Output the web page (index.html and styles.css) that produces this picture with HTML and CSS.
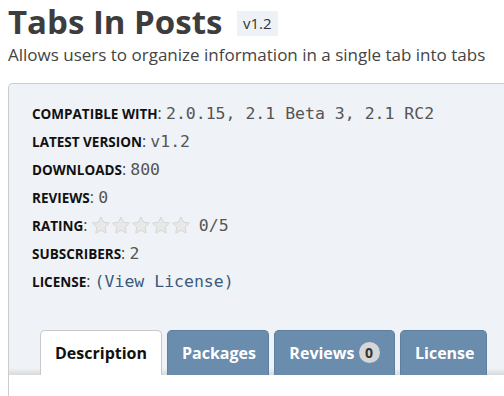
FILE: index.html
```html
<!DOCTYPE html>
<html lang="en">
<head>
  <meta charset="UTF-8" />
  <title>Tabs In Posts</title>
  <link rel="stylesheet" href="styles.css">
</head>
<body>

  <h1 class="title">Tabs In Posts <span class="ver">v1.2</span></h1>
  <p class="summary">Allows users to organize information in a single tab into tabs</p>

  <div class="info">
    <ul class="facts">
      <li><b>COMPATIBLE WITH</b>: <code>2.0.15, 2.1 Beta 3, 2.1 RC2</code></li>
      <li><b>LATEST VERSION</b>: <code>v1.2</code></li>
      <li><b>DOWNLOADS</b>: <code>800</code></li>
      <li><b>REVIEWS</b>: <code>0</code></li>
      <li><b>RATING</b>:
        <span class="stars">
          <svg width="20" height="18" viewBox="0 0 20 18"><path d="M10 1l2.6 5.3 5.8.8-4.2 4.1 1 5.8L10 14.3 4.8 17l1-5.8L1.6 7.1l5.8-.8z"/></svg>
          <svg width="20" height="18" viewBox="0 0 20 18"><path d="M10 1l2.6 5.3 5.8.8-4.2 4.1 1 5.8L10 14.3 4.8 17l1-5.8L1.6 7.1l5.8-.8z"/></svg>
          <svg width="20" height="18" viewBox="0 0 20 18"><path d="M10 1l2.6 5.3 5.8.8-4.2 4.1 1 5.8L10 14.3 4.8 17l1-5.8L1.6 7.1l5.8-.8z"/></svg>
          <svg width="20" height="18" viewBox="0 0 20 18"><path d="M10 1l2.6 5.3 5.8.8-4.2 4.1 1 5.8L10 14.3 4.8 17l1-5.8L1.6 7.1l5.8-.8z"/></svg>
          <svg width="20" height="18" viewBox="0 0 20 18"><path d="M10 1l2.6 5.3 5.8.8-4.2 4.1 1 5.8L10 14.3 4.8 17l1-5.8L1.6 7.1l5.8-.8z"/></svg>
        </span>
        <code>0/5</code></li>
      <li><b>SUBSCRIBERS</b>: <code>2</code></li>
      <li><b>LICENSE</b>: <code class="link">(View License)</code></li>
    </ul>

    <div class="tabs">
      <a class="tab active" href="#description">Description</a>
      <a class="tab" href="#packages">Packages</a>
      <a class="tab" href="#reviews">Reviews <span class="count">0</span></a>
      <a class="tab" href="#license">License</a>
    </div>
    <div class="panel"></div>
  </div>

</body>
</html>
```

FILE: styles.css
```css
body {
  margin: 0;
  padding: 0 0 0 8px;
  font-family: "Open Sans", "Noto Sans", sans-serif;
  color: #444;
  background: #fff;
  overflow: hidden;
}
.title {
  margin: 2px 0 0;
  font-size: 33px;
  line-height: 40px;
  font-weight: 700;
  color: #3d3d3d;
}
.ver {
  display: inline-block;
  vertical-align: 5px;
  margin-left: 6px;
  padding: 0 6px;
  background: #eef2f6;
  font-size: 15px;
  font-weight: 400;
  line-height: 25px;
  color: #333;
}
.summary {
  margin: 2px 0 0;
  font-size: 17px;
  line-height: 22px;
  color: #444;
}
.info {
  margin-top: 17px;
  margin-right: -20px;
  background: #eff3f7;
  border: 1px solid #ccc;
  border-right: none;
  border-bottom: none;
  border-radius: 5px 0 0 0;
}
.facts {
  list-style: none;
  margin: 0;
  padding: 15px 0 0 23px;
}
.facts li {
  height: 28px;
  line-height: 28px;
  font-size: 16px;
  white-space: nowrap;
}
.facts b {
  font-size: 13.5px;
  font-weight: 700;
  color: #111;
}
.facts code {
  font-family: "DejaVu Sans Mono", "Liberation Mono", monospace;
  font-size: 16.5px;
  color: #555;
}
.facts .link {
  color: #3b5a7a;
}
.stars {
  display: inline-flex;
  vertical-align: -3px;
  margin: 0 4px 0 -1px;
}
.stars svg {
  fill: #e8e8e8;
  stroke: #d6d6d6;
  stroke-width: 1;
}
.tabs {
  display: flex;
  gap: 5px;
  align-items: flex-end;
  margin-top: 35px;
  padding-left: 31px;
  background: linear-gradient(#eff3f7 0, #eff3f7 38px, #dadcde 44px);
}
.tab {
  display: block;
  height: 44px;
  line-height: 44px;
  padding: 0 14px;
  border: 1px solid #5f7f9f;
  border-bottom: none;
  border-radius: 5px 5px 0 0;
  background: #6a8cad;
  color: #fff;
  font-size: 16px;
  font-weight: 700;
  text-decoration: none;
  text-align: center;
}
.tab.active {
  background: #fff;
  border-color: #c8c8c8;
  color: #111;
  width: 92px;
}
.tab:nth-child(2) { width: 72px; }
.tab:nth-child(3) { width: 91px; }
.tab:nth-child(4) { width: 57px; }
.count {
  display: inline-block;
  width: 21px;
  height: 21px;
  line-height: 21px;
  border-radius: 50%;
  background: #d6d6d6;
  color: #333;
  text-align: center;
  font-size: 14px;
  vertical-align: 1px;
}
.panel {
  height: 21px;
  background: #fff;
}
```
